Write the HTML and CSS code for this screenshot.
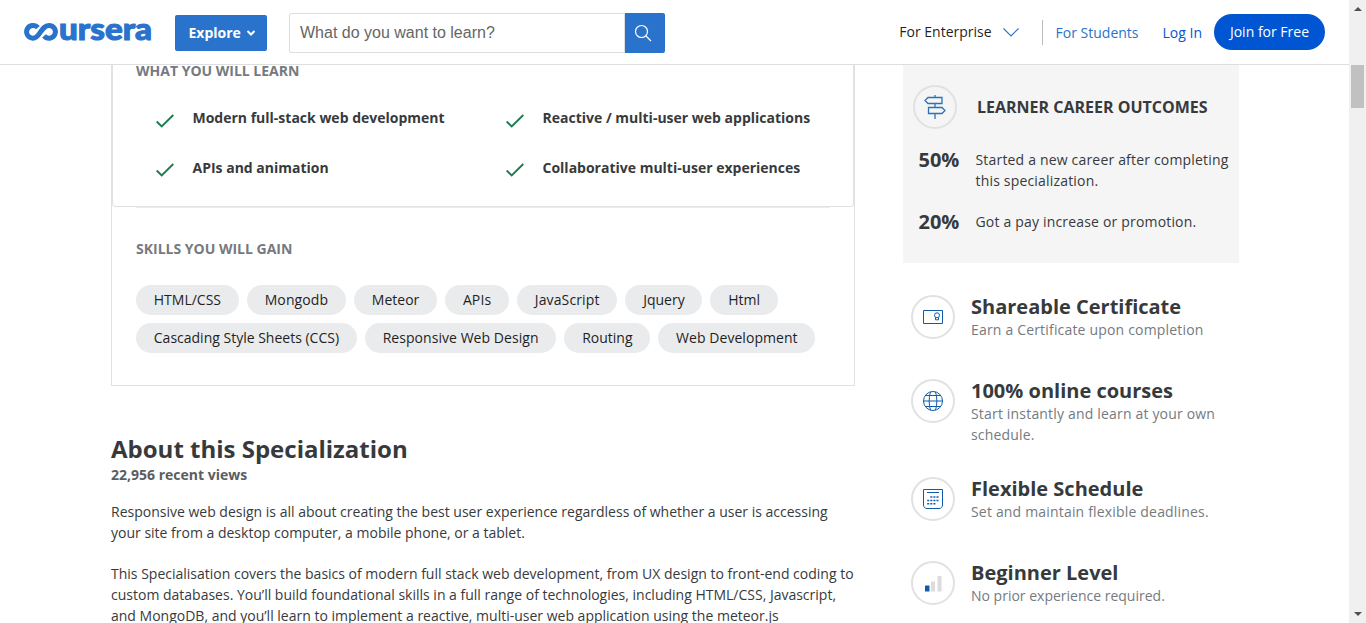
FILE: index.html
```
<!DOCTYPE html>
<html lang="en">
<head>
<meta charset="utf-8">
<title>Specialization | Coursera</title>
<link rel="stylesheet" href="styles.css">
</head>
<body>
<div class="page">
  <header class="header">
    <svg class="logo" width="130" height="26" viewBox="0 0 130 26">
      <path class="logo-mark" d="M14.900 9.700A6.400 6.400 0 1 0 10 20.200C17.200 20.200 17.800 7.400 26 7.400A6.400 6.400 0 1 1 21.100 17.900"/>
      <text class="logo-text" x="36" y="22.300" textLength="93" lengthAdjust="spacingAndGlyphs">ursera</text>
    </svg>
    <button class="explore">Explore
      <svg width="10" height="8" viewBox="0 0 10 8"><path d="M1.500 2l3.500 3.500L8.500 2" fill="none" stroke="#fff" stroke-width="2"/></svg>
    </button>
    <div class="search">
      <div class="search-field">What do you want to learn?</div>
      <div class="search-button">
        <svg width="18" height="18" viewBox="0 0 18 18" fill="none" stroke="#fff" stroke-width="1.200"><circle cx="7.500" cy="7.500" r="6"/><path d="M12 12l5 5"/></svg>
      </div>
    </div>
    <nav class="nav">
      <span class="enterprise">For Enterprise</span>
      <svg class="chevron" width="16" height="9" viewBox="0 0 16 9"><path d="M.500.500L8 8 15.500.500" fill="none" stroke="#2a73cc" stroke-width="1.100"/></svg>
      <span class="divider"></span>
      <span class="students">For Students</span>
      <span class="login">Log In</span>
      <span class="join">Join for Free</span>
    </nav>
  </header>

  <main class="main">
    <section class="content">
      <div class="card">
        <div class="learn">
          <h2 class="label">WHAT YOU WILL LEARN</h2>
          <ul class="outcomes">
            <li><svg class="check" viewBox="0 0 18 14"><path d="M.700 7.500l5 5L17.300 1"/></svg><span>Modern full-stack web development</span></li>
            <li><svg class="check" viewBox="0 0 18 14"><path d="M.700 7.500l5 5L17.300 1"/></svg><span>Reactive / multi-user web applications</span></li>
            <li><svg class="check check-low" viewBox="0 0 18 14"><path d="M.700 7.500l5 5L17.300 1"/></svg><span>APIs and animation</span></li>
            <li><svg class="check check-low" viewBox="0 0 18 14"><path d="M.700 7.500l5 5L17.300 1"/></svg><span>Collaborative multi-user experiences</span></li>
          </ul>
        </div>
        <div class="skills">
          <h2 class="label">SKILLS YOU WILL GAIN</h2>
          <div class="tags">
            <span class="tag">HTML/CSS</span><span class="tag loose">Mongodb</span><span class="tag">Meteor</span><span class="tag loose">APIs</span><span class="tag loose">JavaScript</span><span class="tag">Jquery</span><span class="tag">Html</span>
          </div>
          <div class="tags">
            <span class="tag">Cascading Style Sheets (CCS)</span><span class="tag loose-half">Responsive Web Design</span><span class="tag">Routing</span><span class="tag loose-half">Web Development</span>
          </div>
        </div>
      </div>
      <div class="about">
        <h1>About this Specialization</h1>
        <div class="views">22,956 recent views</div>
        <p>Responsive web design is all about creating the best user experience regardless of whether a user is accessing<br>your site from a desktop computer, a mobile phone, or a tablet.</p>
        <p>This Specialisation covers the basics of modern full stack web development, from UX design to front-end coding to<br>custom databases. You’ll build foundational skills in a full range of technologies, including HTML/CSS, Javascript,<br>and MongoDB, and you’ll learn to implement a reactive, multi-user web application using the meteor.js</p>
      </div>
    </section>

    <aside class="sidebar">
      <div class="career">
        <div class="career-head">
          <span class="circle">
            <svg width="24" height="26" viewBox="0 0 24 26" fill="none" stroke="#2a73b8" stroke-width="1.300"><path d="M12 1v2M12 10v3M12 20v5M5 3.500h14v6H5L2 6.500zM5.500 13.500H19l3 3-3 3H5.500z"/></svg>
          </span>
          <h2>LEARNER CAREER OUTCOMES</h2>
        </div>
        <div class="stat"><b>50%</b><span>Started a new career after completing<br>this specialization.</span></div>
        <div class="stat"><b>20%</b><span>Got a pay increase or promotion.</span></div>
      </div>
      <div class="facts">
        <div class="fact">
          <span class="circle"><svg width="20" height="20" viewBox="0 0 20 20" fill="none" stroke="#0f5cad"><path d="M.500 3.500h19v13H.500z"/><circle cx="14" cy="8.300" r="2.500"/><path d="M12.500 10.500v2.300h3v-2.300"/></svg></span>
          <div><h3>Shareable Certificate</h3><p class="spaced">Earn a Certificate upon completion</p></div>
        </div>
        <div class="fact fact-tall">
          <span class="circle"><svg width="20" height="20" viewBox="0 0 20 20" fill="none" stroke="#0f5cad"><circle cx="10" cy="10" r="9.500"/><path d="M7.500.800C5.700 6 5.700 14 7.500 19.200M12.500.800C14.300 6 14.300 14 12.500 19.200M2.500 4.500h15M.500 10h19M2.500 15.500h15"/></svg></span>
          <div><h3>100% online courses</h3><p class="spaced">Start instantly and learn at your own<br>schedule.</p></div>
        </div>
        <div class="fact">
          <span class="circle"><svg width="20" height="20" viewBox="0 0 20 20" fill="none" stroke="#0f5cad"><path d="M.500.500h19V16c0 2-1.500 3.500-3.500 3.500H4C2 19.500.500 18 .500 16zM4 3.500h12"/><path stroke-width="1.500" stroke-dasharray="2 1.100" d="M7.300 8h9M4.200 11.500h12M4.200 14.800h9"/></svg></span>
          <div><h3>Flexible Schedule</h3><p class="spaced">Set and maintain flexible deadlines.</p></div>
        </div>
        <div class="fact">
          <span class="circle"><svg width="20" height="20" viewBox="0 0 20 20"><path fill="#0f5cad" d="M2 12.500h4.500v6H2z"/><path fill="#dcdcdc" d="M8 8.500h4v10H8zM14.500 3h4v15.500h-4z"/></svg></span>
          <div><h3>Beginner Level</h3><p>No prior experience required.</p></div>
        </div>
      </div>
    </aside>
  </main>

  <div class="scrollbar">
    <span class="arrow-up"></span>
    <span class="thumb"></span>
    <span class="arrow-down"></span>
  </div>
</div>
</body>
</html>
```
FILE: styles.css
```
* { box-sizing: border-box; }
body { margin: 0; overflow: hidden; font-family: "Open Sans", sans-serif; font-size: 14px; line-height: 21px; color: #373a3c; background: #fff; }
h1, h2, h3, p, ul { margin: 0; padding: 0; }
svg { display: block; flex: none; }
.page { display: grid; grid-template: 65px 558px / 1349px 17px; width: 1366px; height: 623px; overflow: hidden; white-space: nowrap; }

.header { grid-area: 1 / 1; display: flex; align-items: center; border-bottom: 1px solid #dedede; padding: 0 24px 0 23px; background: #fff; }
.logo { margin: -2px 22px 0 0; overflow: visible; }
.logo-mark { fill: none; stroke: #2a73cc; stroke-width: 5; }
.logo-text { font: 900 31px Lato, sans-serif; fill: #2a73cc; stroke: #2a73cc; stroke-width: 1.100; }
.explore { display: flex; align-items: center; gap: 5px; width: 92px; height: 36px; margin-top: 2px; border: 0; border-radius: 2px; padding: 0 0 1px 13.500px; background: #2a73cc; color: #fff; font: 700 14px "Open Sans", sans-serif; }
.search { display: flex; width: 376px; height: 40px; margin: 1px 0 0 22px; }
.search-field { flex: 1; border: 1px solid #ddd; border-radius: 2px 0 0 2px; padding-left: 10px; font: 16px/38px "Liberation Sans", Arial, sans-serif; color: #666; }
.search-button { display: grid; place-items: center; width: 40px; background: #2a73cc; border-radius: 0 2px 2px 0; padding-right: 5px; }
.nav { display: flex; align-items: center; margin-left: auto; }
.enterprise { color: #1f1f1f; margin-top: -1px; }
.chevron { margin: 1px 23px 0 11px; }
.divider { width: 1px; height: 25px; background: #bbb; margin-right: 13px; }
.students { color: #2a73cc; margin-right: 24px; }
.login { color: #0056d2; margin-right: 12px; }
.join { width: 111px; height: 36px; border-radius: 18px; background: #0056d2; color: #fff; text-align: center; line-height: 35px; }

.main { grid-area: 2 / 1; display: flex; overflow: hidden; padding-left: 111px; }
.content { width: 744px; margin-right: 48px; }
.card { height: 321px; border: 1px solid #e1e1e1; border-top: 0; }
.learn { height: 142px; border: 1px solid #e1e1e1; border-top: 0; border-radius: 0 0 4px 4px; padding: 0 23px; }
.label { font-size: 14px; line-height: 21px; font-weight: 700; color: #757a80; }
.learn .label { line-height: 11px; }
.outcomes { display: grid; grid-template-columns: 350px 350px; grid-auto-rows: 50px; list-style: none; margin-top: 31px; padding-left: 20px; }
.outcomes li { display: flex; font-weight: 700; }
.check { width: 18px; height: 14px; margin: 6.500px 18.500px 0 0; fill: none; stroke: #1d7c50; stroke-width: 1.900; }
.check-low { margin-top: 5.500px; }
.skills { margin: 0 24px; border-top: 1px solid #ececec; padding-top: 30px; }
.skills .label { margin-bottom: 26px; }
.tags { display: flex; gap: 8px; margin-bottom: 8px; }
.tag { height: 30px; border-radius: 15px; padding: 0 17.800px; background: #eaebed; color: #1f1f1f; line-height: 29px; }
.loose { letter-spacing: .12px; }
.loose-half { letter-spacing: .05px; }
.about { padding-top: 47px; }
.about h1 { font-size: 24px; line-height: 32px; font-weight: 700; }
.views { margin-top: -1px; font-weight: 700; color: #5a5e62; }
.about p { margin-top: 16px; }
.about p + p { margin-top: 20px; }

.sidebar { width: 336px; }
.career { height: 198px; background: #f5f5f5; padding: 20px 0 0 10px; }
.circle { display: grid; place-items: center; flex: none; width: 44px; height: 44px; border: 2px solid #e1e1e1; border-radius: 50%; }
.career-head { display: flex; align-items: center; gap: 20px; margin-bottom: 20px; }
.career-head h2 { font-size: 16px; font-weight: 700; }
.stat { display: flex; margin-bottom: 20px; padding-left: 5.500px; }
.stat b { width: 57px; font-size: 20px; font-weight: 700; }
.stat span, .spaced { letter-spacing: .18px; }
.facts { padding: 32px 0 0 8px; }
.fact { display: flex; height: 84px; gap: 16px; }
.fact-tall { height: 98px; }
.fact h3 { font-size: 20px; line-height: 24px; font-weight: 700; }
.fact p { color: #757a80; }

.scrollbar { grid-area: 1 / 2 / 3 / 3; display: flex; flex-direction: column; align-items: center; background: #f0f0f0; }
.arrow-up { border: 4px solid transparent; border-top: 0; border-bottom-color: #505050; margin-top: 7px; }
.thumb { width: 13px; height: 43px; margin-top: 54px; background: #c1c1c1; }
.arrow-down { border: 4px solid transparent; border-bottom: 0; border-top-color: #505050; margin: auto 0 7px; }
```
